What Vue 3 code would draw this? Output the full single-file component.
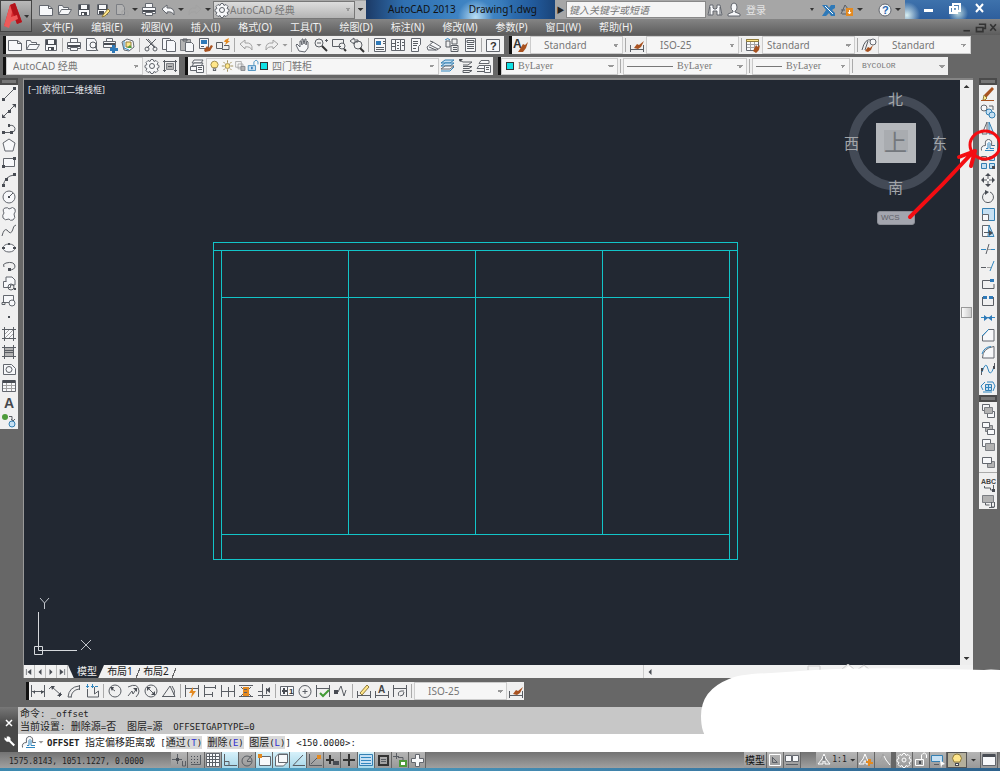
<template>
  <div class="app">
    <header class="header">
      <button class="logo" aria-label="Application menu">
        <svg width="32" height="31" viewBox="0 0 32 31">
          <path d="M3 25L9 4l5-2 7 19-5 2-2-5-5 2-1 6z" fill="#d7282d" />
          <path d="M9 4l5-2 7 19-5 2z" fill="#b3131b" />
          <path d="M3 25L9 4l2 7-1 5 6-2 1 4-7 3-2 6z" fill="#ee5a5a" />
          <path d="M23 14h5l-2 3z" fill="#333" />
        </svg>
      </button>
      <div class="titlebar">
        <div class="quick">
          <template v-for="(name, i) in quickTools" :key="i">
            <i v-if="name === 'v'" class="caret"></i>
            <button v-else class="tool" :aria-label="name"><Icon :name="name" /></button>
          </template>
        </div>
        <label class="field workspace-top">
          <Icon name="gear" />
          <select aria-label="Workspace"><option>AutoCAD 经典</option></select>
        </label>
        <button class="more" aria-label="More"><i class="caret"></i></button>
        <h1 class="title"><span>AutoCAD 2013</span><span>Drawing1.dwg</span></h1>
        <button class="play" aria-label="Expand">▶</button>
        <input class="search" type="text" placeholder="键入关键字或短语" aria-label="Search" />
        <button class="tool" aria-label="Find"><Icon name="binoculars" /></button>
        <button class="login"><Icon name="user" />登录</button>
        <i class="caret login-caret"></i>
        <button class="tool" aria-label="Exchange"><Icon name="exchange" /></button>
        <button class="tool" aria-label="Connect"><Icon name="connect" /></button>
        <i class="caret"></i>
        <button class="tool help" aria-label="Help"><Icon name="help" /></button>
        <i class="caret"></i>
        <div class="window-buttons">
          <button aria-label="Minimize"><Icon name="min" /></button>
          <button aria-label="Restore"><Icon name="restore" /></button>
          <button aria-label="Close"><Icon name="close" /></button>
        </div>
      </div>
      <nav class="menu">
        <a v-for="item in menu" :key="item" href="#">{{ item }}</a>
        <div class="doc-buttons">
          <button aria-label="Minimize drawing"><Icon name="docMin" /></button>
          <button aria-label="Restore drawing"><Icon name="docRestore" /></button>
          <button aria-label="Close drawing"><Icon name="docClose" /></button>
        </div>
      </nav>
    </header>

    <div class="toolbars">
      <div class="row">
        <div class="bar standard">
          <template v-for="(name, i) in standardTools" :key="i">
            <i v-if="name === '|'" class="sep"></i>
            <i v-else-if="name === 'v'" class="caret soft"></i>
            <button v-else class="tool" :aria-label="name"><Icon :name="name" /></button>
          </template>
        </div>
        <div class="bar styles">
          <template v-for="(style, i) in styles" :key="i">
            <i v-if="i" class="sep"></i>
            <button class="tool" :aria-label="style.icon"><Icon :name="style.icon" /></button>
            <select class="style-select" :class="{ tight: style.tight }" :aria-label="style.label">
              <option>{{ style.value }}</option>
            </select>
          </template>
        </div>
      </div>
      <div class="row">
        <div class="bar">
          <select class="workspace-select" aria-label="Current workspace"><option>AutoCAD 经典</option></select>
          <button class="tool" aria-label="Workspace settings"><Icon name="gear" /></button>
          <button class="tool" aria-label="My workspace"><Icon name="frame" /></button>
        </div>
        <div class="bar layers">
          <button class="tool" aria-label="Layer properties"><Icon name="layerProps" /></button>
          <label class="field layer-field">
            <Icon name="bulb" /><Icon name="sun" /><Icon name="freeze" /><Icon name="unlock" />
            <i class="swatch"></i>
            <select aria-label="Layer"><option>四门鞋柜</option></select>
          </label>
          <button class="tool" aria-label="Make current"><Icon name="layers" /></button>
          <button class="tool" aria-label="Previous layer"><Icon name="layerPrev" /></button>
          <button class="tool" aria-label="Layer states"><Icon name="layerState" /></button>
        </div>
        <div class="bar properties">
          <label class="field color-field">
            <i class="swatch"></i>
            <select aria-label="Color"><option>ByLayer</option></select>
          </label>
          <i class="sep"></i>
          <label class="field type-field">
            <i class="line long"></i>
            <select aria-label="Linetype"><option>ByLayer</option></select>
          </label>
          <i class="sep"></i>
          <label class="field weight-field">
            <i class="line"></i>
            <select aria-label="Lineweight"><option>ByLayer</option></select>
          </label>
          <i class="sep"></i>
          <select class="plot-select" aria-label="Plot style"><option>BYCOLOR</option></select>
        </div>
      </div>
    </div>

    <main class="workspace">
      <aside class="palette">
        <i class="grip"></i>
        <div class="stack draw-stack">
          <button v-for="name in drawTools" :key="name" class="tool" :aria-label="name"><Icon :name="name" /></button>
        </div>
      </aside>

      <section class="document">
        <div class="canvas">
          <p class="view-label">[−][俯视][二维线框]</p>
          <svg class="cabinet" width="526" height="318" viewBox="0 0 526 318">
            <g fill="none" stroke="#12c4c8" shape-rendering="crispEdges">
              <path d="M.5 .5h524v317H.5z" />
              <path d="M.5 8.500h524M8.500 55.500h508M8.500 292.500h508" />
              <path d="M8.500 8.500v309M516.500 8.500v309M135.500 8.500v284M262.500 8.500v284M389.500 8.500v284" />
            </g>
          </svg>
          <div class="compass">
            <svg width="110" height="110" viewBox="0 0 110 110">
              <circle cx="55" cy="55" r="43" fill="none" stroke="#434a56" stroke-width="9" />
              <rect x="35" y="35" width="40" height="40" fill="#b5b8bc" />
              <rect x="43" y="42" width="24" height="22" fill="#a9acb0" />
            </svg>
            <span class="north">北</span>
            <span class="west">西</span>
            <span class="up">上</span>
            <span class="east">东</span>
            <span class="south">南</span>
          </div>
          <button class="wcs">WCS</button>
          <svg class="ucs" width="62" height="62" viewBox="0 0 62 62">
            <path d="M4.500 52V16M8 54.500h35M.5 50.500h8v8h-8zM4.500 51v3.500h4" fill="none" stroke="#d5d8dc" />
            <path d="M6 2l4.500 5L15 2M10.500 7v6M47 44l10 10M57 44L47 54" fill="none" stroke="#c0c4ca" />
          </svg>
        </div>
        <div class="scroll-y">
          <button aria-label="Scroll up"><i class="up-arrow"></i></button>
          <i class="thumb"></i>
          <button aria-label="Scroll down"><i class="caret"></i></button>
        </div>
        <div class="tabs">
          <button v-for="name in ['first', 'prev', 'next', 'last']" :key="name" class="nav" :aria-label="name">
            <Icon :name="name" />
          </button>
          <button class="tab active">模型</button>
          <button class="tab">布局1</button>
          <button class="tab">布局2</button>
          <button class="scroll-left" aria-label="Scroll left"><Icon name="prev" /></button>
        </div>
      </section>

      <aside class="palette">
        <i class="grip"></i>
        <div class="stack modify-stack">
          <button v-for="name in modifyTools" :key="name" class="tool" :aria-label="name"><Icon :name="name" /></button>
        </div>
        <i class="grip"></i>
        <div class="stack order-stack">
          <button v-for="name in orderTools" :key="name" class="tool" :aria-label="name"><Icon :name="name" /></button>
          <i class="divider"></i>
          <button class="tool" aria-label="Text to front"><Icon name="abcFront" /></button>
          <button class="tool" aria-label="Hatch to back"><Icon name="hatchBack" /></button>
        </div>
      </aside>

      <svg class="pointer" width="100" height="160" viewBox="0 0 100 160">
        <ellipse cx="85" cy="67" rx="15" ry="14" fill="none" stroke="#f40d12" stroke-width="3" />
        <path d="M10 139Q43 107 74 73M59 79l16-6-4 15" fill="none" stroke="#f40d12" stroke-width="4" stroke-linecap="round" stroke-linejoin="round" />
      </svg>
    </main>

    <div class="dock">
      <div class="bar dimension">
        <template v-for="(name, i) in dimensionTools" :key="i">
          <i v-if="name === '|'" class="sep"></i>
          <button v-else class="tool" :aria-label="name"><Icon :name="name" /></button>
        </template>
        <select class="style-select" aria-label="Dimension style"><option>ISO-25</option></select>
        <button class="tool" aria-label="Dimension style manager"><Icon name="dimStyle" /></button>
      </div>
    </div>

    <section class="command">
      <div class="command-side">
        <button aria-label="Close"><Icon name="cmdClose" /></button>
        <button aria-label="Customize"><Icon name="wrench" /></button>
      </div>
      <div class="command-body">
        <div class="history">
          <p><b>命令</b>: _offset</p>
          <p><b>当前设置</b>: <b>删除源</b>=<b>否</b>{{ '  ' }}<b>图层</b>=<b>源</b>{{ '  ' }}OFFSETGAPTYPE=0</p>
        </div>
        <div class="prompt">
          <Icon name="offset" /><i class="caret soft"></i>
          <p><strong>OFFSET</strong> <b>指定偏移距离或</b> [<button><b>通过</b>(<em>T</em>)</button> <button><b>删除</b>(<em>E</em>)</button> <button><b>图层</b>(<em>L</em>)</button>] &lt;150.0000&gt;:</p>
        </div>
      </div>
    </section>

    <footer class="status">
      <span class="coords">1575.8143, 1051.1227, 0.0000</span>
      <div class="toggles">
        <button v-for="item in toggles" :key="item.icon" :class="{ on: item.on }" :aria-label="item.icon">
          <Icon :name="item.icon" />
        </button>
      </div>
      <div class="status-right">
        <button class="model">模型</button>
        <button aria-label="Layout"><Icon name="layoutView" /></button>
        <button aria-label="Quick view"><Icon name="quickView" /></button>
        <i class="gap"></i>
        <button class="scale"><Icon name="person" />1:1<i class="caret"></i></button>
        <button aria-label="Annotation visibility"><Icon name="personSun" /></button>
        <button aria-label="Auto scale"><Icon name="personOff" /></button>
        <i class="gap small"></i>
        <button aria-label="Settings"><Icon name="gearLight" /></button>
        <button aria-label="Lock"><Icon name="lockLight" /></button>
        <button aria-label="Hardware"><Icon name="hardware" /></button>
        <button class="pressed" aria-label="Isolate"><Icon name="bulb" /></button>
        <button class="narrow" aria-label="Status menu"><i class="caret"></i></button>
        <button aria-label="Clean screen"><Icon name="screen" /></button>
      </div>
    </footer>
    <div class="taskbar"></div>

    <svg class="patch" width="299" height="88" viewBox="0 0 299 88">
      <path d="M107 6V2h12v4M140 6l7-6 7 6M156 6l7-5 6 5" fill="none" stroke="#ccc" />
      <path d="M299 6q-10-1-16 0L240 5q-80-2-126 1L70 9Q38 10 28 15 0 26 0 52q0 18 8 24v9h291z" fill="#fff" />
      <path d="M141 7l7-5 6 5M156 7l7-4 6 4" fill="#fff" />
    </svg>
  </div>
</template>

<script setup>
import { h } from 'vue'

// Every icon is a list of strokes on a 16x16 grid, each one starting with its paint key
const paints = {
  k: { stroke: '#5a5e64' },
  n: { stroke: '#a2a2a2' },
  b: { stroke: '#3187c0' },
  l: { stroke: '#fff' },
  w: { fill: '#f7f8fa', stroke: '#63676e' },
  u: { fill: '#c6e0f3', stroke: '#3480b3' },
  K: { fill: '#484c53' },
  N: { fill: '#b2b2b2', stroke: '#7c7f84' },
  B: { fill: '#2e79b8' },
  L: { fill: '#fff' },
  y: { fill: '#ffe68a', stroke: '#8f7b3b' },
  o: { fill: '#e48a20' },
  r: { fill: '#a85220' },
  g: { fill: '#4d9b3a' },
  G: { stroke: '#429b35', 'stroke-width': 2 },
  W: { stroke: '#fff', 'stroke-width': 2 },
  D: { stroke: '#333', 'stroke-width': 2 }
}

const icons = {
  new: 'w M1.500 3.500h9l4 3v7h-13z;k M10.500 3.500v3h4',
  open: 'w M1.500 12.500v-9h4l1 2h5v2;w M1.500 12.500l3-5h10l-3 5z',
  save: 'w M2.500 2.500h11v11h-11z;K M3 3h2v4h6V3h2v5H3z;K M5 10h6v3H5z;L M6 11h2v2H6z',
  saveAs: 'w M2.500 2.500h10v10h-10z;K M3 3h1v4h7V3h1v5H3z;K M4 9h5v3H4z;y M8 13l5-6 2 2-5 5-3 1z',
  cloud: 'N M2.500 2.500h6l2 3v7h-8z;n M8 9h6v5H8z',
  print: 'w M4.500 5.500v-4h7v4;w M1.500 5.500h13v6h-13z;K M2 8h12v2H2z;w M4.500 10.500h7v3h-7z',
  undo: 'w M2 7l5-4v3q8-1 7 7-2-4-7-3v2z',
  redo: 'n M14 7L9 3v3Q1 5 2 13q2-4 7-3v2z',
  undoSoft: 'n M2 7l5-4v3q8-1 7 7-2-4-7-3v2z',
  gear: 'w M7 1.500h2l1 2 2-1 2 2-1 2 2 1v2l-2 1 1 2-2 2-2-1-1 2H7l-1-2-2 1-2-2 1-2-2-1v-2l2-1-1-2 2-2 2 1z;k M5.500 8a2.500 2.500 0 1 0 5 0 2.500 2.500 0 1 0-5 0',
  gearLight: 'l M7 1.500h2l1 2 2-1 2 2-1 2 2 1v2l-2 1 1 2-2 2-2-1-1 2H7l-1-2-2 1-2-2 1-2-2-1v-2l2-1-1-2 2-2 2 1z;l M6 8a2 2 0 1 0 4 0 2 2 0 1 0-4 0',
  binoculars: 'w M3 3h3v3l1 1h2l1-1V3h3l2 10h-5V9H6v4H1z;k M3 5v8M13 5v8',
  user: 'w M5 5q0-4 3-4t3 4-2 4v1l5 2v2H2v-2l5-2V9Q5 8 5 5z',
  exchange: 'B M1 3h5l2 3 2-3h4v3l-3 2 3 3v3h-4l-2-3-3 3H1l4-6z;l M4 4l8 8',
  connect: 'k M2 12l4-9 3 4M3 12h4M2 8h4;o M7 6h7v8H7z;l M10.500 8v4M9 10l1.500 2 1.500-2',
  help: 'w M2 8a6 6 0 1 0 12 0 6 6 0 1 0-12 0;t 5 12 11 #2767b0 ?',
  min: 'L M3 9h9v3H3z',
  restore: 'W M6 4h7v7H6z;W M3 7h7v6H3z',
  close: 'W M4 4l7 8M11 4l-7 8',
  docMin: 'D M3 12h8',
  docRestore: 'D M6 4h8v5h-3M3 8h8v5H3z',
  docClose: 'D M4 4l7 8M11 4l-7 8',
  preview: 'w M2.500 1.500h8l2 3v9h-10z;k M6 8a3 3 0 1 0 6 0 3 3 0 1 0-6 0M11 10l3 4',
  publish: 'w M4.500 4.500v-3h6v3;w M1.500 4.500h12v6h-12z;K M2 6h11v2H2z;B M10 8h3v3h3v3h-3v2h-3v-2H8v-3h2z',
  web: 'w M2 5l5-3 6 2 1 6-5 4-5-1z;y M6 5h5v5H6z;b M4 4v7l5 2;g M7 11l3-3 2 3z',
  cut: 'k M3 2l9 9M13 2l-9 9M5 2l7 8;k M2 12a2 2 0 1 0 4 0 2 2 0 1 0-4 0M10 12a2 2 0 1 0 4 0 2 2 0 1 0-4 0',
  copy: 'w M1.500 1.500h7l2 2v9h-9z;w M5.500 3.500h7l2 2v9h-9z',
  paste: 'N M1.500 2.500h10v11h-10z;k M4 2h4v2H4z;w M6.500 5.500h6l2 2v7h-8z',
  match: 'w M2.500 1.500h9v10h-9z;B M4 3h6v4H4z;k M4 9.500h3;r M7 13l3-4 2 2 2-3 2 1-3 5-5 1z',
  block: 'k M1.500 5.500h6v6h-6zM9 8.500h5v4H7;o M10 3l4-2-1 3h2l-5 4 1-3h-2z',
  hand: 'w M4 14L1 8l1-1 3 3V4h1l1 4V2h1l1 5 1-5h1v6l1-4 1 1v6l-3 4z',
  zoomRt: 'k M2 6a4 4 0 1 0 8 0 4 4 0 1 0-8 0M4 6h4;D M9 9l5 5;k M12 3.500h3M13.500 2v3',
  zoomWin: 'k M10 9.500H1.500v-7h11v4;k M8 9a3 3 0 1 0 6 0 3 3 0 1 0-6 0;D M13 12l2 2',
  zoomPrev: 'k M5 8a4 4 0 1 0 8 0 4 4 0 1 0-8 0;D M11 11l4 4;k M1 4l4-3v2h4v2H5v2z',
  props: 'w M2.500 1.500h11v13h-11z;B M4 4h5v4H4z;k M4 10.500h8M4 12.500h8M11 4.500h2M11 6.500h2',
  center: 'w M1.500 2.500h13v11h-13z;k M5.500 3v10M10.500 3v10M7 5.500h2M12 5.500h2M7 8.500h2M12 8.500h2M2 6.500h3M2 9.500h3M7 11.500h2',
  palettes: 'w M3.500 1.500h9v6l-2 2v5h-7z;k M5 4.500h5M5 6.500h5M5 8.500h4M5 11.500h3',
  sheet: 'w M1 10l6-5 8 5-4 3H2z;k M4 8l8 4M3 10l7 3M7 5l-3-1',
  markup: 'k M2 4h4v6H2zM8 2h5v5H8zM7 8.500h7v6H7zM9 10.500h4M9 12.500h4;b M1 3q3-3 5 0',
  calc: 'w M3.500 1.500h10v13h-10z;k M5 3.500h7v2H5zM5 7.500h7M5 9.500h7M5 11.500h7',
  question: 'w M1.500 2.500h13v12h-13z;t 5 13 11 #333 ?',
  textStyle: 't 0 11 12 #333 A;r M7 12l3-5 2 1 3-3-2 6-3 4H5z',
  dimStyle: 'k M1.500 8v7M14.500 8v7M2 12.500h12;r M5 11l3-4 2 1 5-4-3 6-3 2z',
  tableStyle: 'w M1.500 2.500h12v9l-3 2h-9z;y M1.500 2.500h12v2h-12z;n M2 7.500h11M2 10.500h10M5.500 5v8M9.500 5v8;r M8 14l3-6 2 2 2-2-1 5-3 3z',
  leaderStyle: 'k M1 13q3-12 9-10M4 13l3-9;w M9 5a3 3 0 1 0 6 0 3 3 0 1 0-6 0;r M4 14l3-4 2 1 3-3-2 5-3 2z',
  frame: 'N M4.500 5.500h7v6h-7z;k M1 3.500h14M2.500 2v12M13.500 2v12M1 12.500h3M12 12.500h3M6 8.500h4',
  layerProps: 'w M5 2h9l-2 3H3z;w M5 5h9l-2 3H3z;w M1.500 8.500h7v4h-7z;w M7.500 7.500h7v7h-7z;k M9 9.500h4M9 11.500h4',
  layers: 'u M5 2h9l-4 3H1z;u M5 5h9l-4 3H1z;w M5 8h9l-4 3H1z;b M1 13h9l4-4',
  layerPrev: 'k M1 2l4 2h9l-4 3H5M5 8.500h9l-3 2H5M5 12.500h9l-3 2H5z;K M1 1h4L2 4z',
  layerState: 'w M5 2.500h8v3H3zM3 7.500h7v3H1z;k M1 13.500h7;w M8.500 7.500h6v7h-6z;k M10 9.500h3M10 11.500h3',
  bulb: 'y M5 10Q2 6 5 3q3-2 6 0 3 3 0 7z;K M6 11h4v3H6z;L M7 12h2v1H7z',
  sun: 'y M5 8a3 3 0 1 0 6 0 3 3 0 1 0-6 0;y M8 1v3M8 12v3M1 8h3M12 8h3M3 3l2 2M11 11l2 2M13 3l-2 2M3 13l2-2',
  freeze: 'n M2 2.500h7v7H2zM5 5.500h6v6H5z;N M8.500 8.500h5v5h-5z',
  unlock: 'u M1.500 7.500h9v6h-9z;b M8.500 7V3q3-4 5 0v3;B M5 9h2v3H5z',
  lockLight: 'l M2.500 7.500h8v6h-8z;l M8.500 7V3q3-4 5 0v3;K M6 9h2v3H6z',
  // draw palette
  line: 'k M3 13L13 3;K M1 12h3v3H1zM12 1h3v3h-3z',
  xline: 'k M2 14L14 2;K M1 11l4 4H1zM11 1h4v4zM7 7h3v3H7z',
  pline: 'k M2 12.500h8q5-1 4-4-1-4-6-3;K M1 11h3v3H1zM9 11h3v3H9zM7 4h2v3H7z',
  polygon: 'w M8 2l6 4-2 8H4L2 6z',
  rect: 'w M2.500 4.500h11v8h-11z;K M1 11h3v3H1zM12 3h3v3h-3z',
  arc: 'k M2 14Q4 4 13 3;K M1 12h3v3H1zM4 6h3v3H4zM12 1h3v3h-3z',
  circle: 'w M2 8a6 6 0 1 0 12 0 6 6 0 1 0-12 0;k M8 8l4-4;K M7 7h2v2H7z',
  revcloud: 'w M3 7Q1 3 4 2q3-1 4 1 4-3 6 0 1 3-1 5 2 4-1 6-3 1-4-1-4 2-6-1-1-3 1-5z',
  spline: 'k M1 13q2-8 5-6 4 6 6-1 0-3 3-4',
  ellipse: 'w M2 8a6 4 0 1 0 12 0 6 4 0 1 0-12 0;K M1 7h3v2H1zM12 7h3v2h-3zM7 3h2v2H7z',
  ellipseArc: 'k M3 9Q1 6 5 5q8-2 9 3 0 4-6 4;K M7 10h3v3H7z',
  insert: 'w M2.500 6.500h7v6h-7z;w M5 6V2h6l3 3v5h-4;k M7 12a3 3 0 1 0 6 0 3 3 0 1 0-6 0;K M13 13h2v2h-2z',
  makeBlock: 'w M2.500 3.500h10v7h-10z;w M8 11a3 3 0 1 0 6 0 3 3 0 1 0-6 0;k M1 10.500h3v2H1z',
  point: 'K M7 7h2v2H7z',
  hatch: 'w M3.500 3.500h9v9h-9z;k M1 3.500h14M1 12.500h14M3.500 1v14M12.500 1v14;n M4 8l4-4M4 12l8-8M8 12l4-4',
  gradient: 'N M3.500 3.500h9v9h-9z;k M1 3.500h14M1 12.500h14M3.500 1v14M12.500 1v14M4 6.500h8M4 8.500h8',
  region: 'w M2.500 13.500v-10h8l4 4v6z;k M5 8.500a3 3 0 1 0 6 0 3 3 0 1 0-6 0',
  table: 'w M1.500 2.500h13v11h-13z;K M2 2h12v3H2z;n M2 7.500h12M2 10.500h12M5.500 5v8M10.500 5v8',
  mtext: 't 3 13 14 #44474d A',
  addSelected: 'g M1 5a3 3 0 1 0 6 0 3 3 0 1 0-6 0;k M8 4.500h3v4M10 7l2 2 2-2;u M8 12a3 3 0 1 0 6 0 3 3 0 1 0-6 0',
  // modify palette
  erase: 'r M4 9l8-8 2 2-8 9z;y M4 9l3 3-2 2H3z;r M1 14h13v1H1z',
  copyObj: 'w M1 5a3 3 0 1 0 6 0 3 3 0 1 0-6 0;u M6 9a3 3 0 1 0 6 0 3 3 0 1 0-6 0;u M9 12a3 3 0 1 0 6 0 3 3 0 1 0-6 0;k M9 3h4v4',
  mirror: 'w M7 2v12H2z;u M9 2v12h5z',
  offset: 'w M1.500 13.500q-1-5 4-5-1-6 3-6t3 6h3;b M5 13.500h9M6 11.500h2v-5q1-2 2 0v5h4;b M14 8.500h1',
  array: 'w M1.500 2.500h5v4h-5z;u M9.500 2.500h5v4h-5zM1.500 9.500h5v5h-5zM9.500 9.500h5v5h-5z;K M12 12h3v3h-3z',
  move: 'k M8 2v12M2 8h12;K M5 4l3-3 3 3zM5 12l3 3 3-3zM4 5L1 8l3 3zM12 5l3 3-3 3z;L M7 7h2v2H7z',
  rotate: 'k M6 3a5.500 5.500 0 1 0 4 0;K M5 1l4 2-4 3z',
  scale: 'u M2.500 2.500h12v12h-12z;w M2.500 8.500h6v6h-6z',
  stretch: 'w M2.500 2.500h7v11h-7z;u M9 2l5 11.500H8z;k M4 9.500h7;K M9 7l4 3-4 3z',
  trim: 'b M1 8.500h5M11 8.500h4;k M6 13L9 3;n M8 8.500h3',
  extend: 'k M1 9.500h5;n M7 9.500h4;b M10 13l4-10',
  breakPoint: 'k M13 5.500H2.500v8H14V9;B M10 4h4v3h-4z',
  break: 'k M2.500 5v8.500h11V5;B M3 4h4v3H3zM9 4h4v3H9z',
  join: 'b M1 8.500h14;B M4 6l4 3-4 3zM12 6L8 9l4 3z',
  chamfer: 'w M2.500 14V9l6-6.500H14V14z;b M2 9l7-7',
  fillet: 'w M2.500 14q0-10 11.500-11.500V14z;b M2 10Q4 3 11 2.500',
  blend: 'k M1.500 14V9M14.500 2v5;b M2 11q4-12 6-3t6-2;K M1 7h2v3H1zM13 5h2v3h-2z',
  explode: 'u M5.500 6.500h6v6h-6z;b M3 12L1 8l4-4M7 4h6l2 4-2 5M3 14h9M8.500 7v6M5 9.500h6',
  front: 'w M2.500 1.500h7v6h-7z;w M7.500 8.500h7v6h-7z;N M4.500 4.500h8v6h-8z',
  back: 'N M5.500 5.500h7v6h-7z;w M2.500 2.500h7v5h-7z;w M7.500 9.500h7v5h-7z',
  above: 'w M2.500 2.500h8v7h-8z;N M5.500 6.500h9v7h-9z',
  under: 'N M7.500 7.500h7v6h-7z;w M2.500 3.500h9v6h-9z',
  abcFront: 't 1 8 7 #444 ABC;k M4.500 10v2h6v2h3V9;K M12 13h3v3h-3z',
  hatchBack: 'N M2.500 2.500h11v7h-11z;k M5.500 10v2h4M11.500 9v5h3V9M9 14.500h5',
  // layout tabs
  first: 'k M4.500 4v8;K M11 4v8L6 8z',
  prev: 'K M10 4v8L6 8z',
  next: 'K M6 4v8l4-4z',
  last: 'k M11.500 4v8;K M5 4v8l5-4z',
  // dimensions
  linear: 'k M1.500 2v12M14.500 2v12M2 8.500h12;K M3 9l2-2v4zM14 9l-3-2v4z',
  aligned: 'k M1 6l3-3M11 14l3-3M4 4l9 8;K M3 3h4L4 7zM13 13V9l-4 4z',
  arcLength: 'k M2 14Q3 4 13 3M5 14q1-7 8-8M2 14h4M13.500 2v5',
  ordinate: 'k M3.500 6v8h11V8l-4 3V4;b M2 3.500h3M7 3.500h3M3.500 1v4M8.500 1v4M11 3.500h3',
  radius: 'k M2 8a6 6 0 1 0 12 0 6 6 0 1 0-12 0M8 8L4 5;K M3 4h4L5 8z',
  jogged: 'k M3 4q10-5 11 4 0 3-3 6M3 13l4-5 1 3 4-6;K M8 5h4v4z',
  diameter: 'k M2 8a6 6 0 1 0 12 0 6 6 0 1 0-12 0M4 4l8 8;K M4 4h4L4 8zM12 12V8l-4 4z',
  angular: 'k M1 13.500h13L9 3 2 13M11 3q4 5 2 9',
  quick: 'k M1.500 2v12M14.500 2v12M2 5.500h12;o M9 4L5 10h3l-1 5 5-7H9z',
  baseline: 'k M2.500 2v12M13.500 2v4M10.500 9v5M3 4.500h10M3 11.500h8',
  continue: 'k M1.500 2v12M8.500 4v10M14.500 2v12M2 8.500h12',
  space: 'k M1 2.500h14M1 13.500h14M3 4l3 3M13 4l-3 3M3 13l3-3M13 13l-3-3;o M5 4h6v9H5z;k M6 6.500h3M6 9.500h3',
  breakDim: 'k M6.500 1v14M2 12.500h12M2 8.500h4M10.500 5v6;K M10 7l4-3v6z',
  tolerance: 'w M1.500 3.500h13v9h-13z;k M8.500 4v9;K M3 7h5v2H3zM4 5h2v6H4z;t 10 11 8 #333 1',
  centerMark: 'k M2 8.500a6 6 0 1 0 12 0 6 6 0 1 0-12 0M8 6v5M5.500 8.500h5',
  inspect: 'k M1.500 2v12M14.500 2v12M2 5.500h12;G M5 10l3 3 6-6',
  jogLine: 'k M1 9h4l3-6 3 10 2-6;K M1 7h4v4H1z',
  dimEdit: 'k M1.500 8v7M14.500 8v7M2 12.500h12;y M4 10l7-8 2 2-7 8z',
  dimText: 'k M1.500 8v7M14.500 8v7M2 12.500h12;t 4 10 10 #444 A',
  dimUpdate: 'k M1.500 2v12M14.500 2v12M2 5.500h12M7 13q-2-4 2-5h3M12 9q0 4-4 4',
  cmdClose: 'W M4 4l8 8M12 4l-8 8',
  wrench: 'L M2 3l3 2V2h3l2 2v3l6 6-2 2-6-6H5L2 6z',
  // status bar
  infer: 'k M6.500 2v10M1 7.500h10M11.500 9v5h3V9;K M5 6h3v3H5z',
  snap: 'k M3 12.500h9.500V3;K M3 4h1v1H3zM6 4h1v1H6zM9 4h1v1H9zM3 7h1v1H3zM6 7h1v1H6zM9 7h1v1H9zM3 10h1v1H3zM6 10h1v1H6zM9 10h1v1H9z',
  grid: 'w M1.500 1.500h13v13h-13z;k M2 4.500h12M2 7.500h12M2 10.500h12M4.500 2v12M7.500 2v12M10.500 2v12',
  ortho: 'k M2.500 2v11.500H15M3 9.500h4v4',
  polar: 'k M3 9a5 5 0 1 0 10 0 5 5 0 1 0-10 0M8 9l5-6M8 9.500h4',
  osnap: 'w M3.500 4.500h11v9h-11z;o M2 2h4v4H2z',
  osnap3d: 'w M2.500 8V5l3-3h9v8l-4 4h-8zM5.500 2.500h9v8h-9z',
  otrack: 'k M13 3L3 13.500h12',
  ducs: 'k M2.500 2v11.500H15M4 12l8-8;o M10 3h4v4h-4z',
  dyn: 'D M6 3v9M2 8h8;K M9 9h6v4H9z',
  lwt: 'D M8 2v12M2 8h12',
  tpy: 'u M1.500 2.500h13v11h-13z;b M3 5.500h10M3 8.500h10M3 11.500h10',
  qp: 'D M4 4h9v9H4z;k M6 7.500h5M6 9.500h5',
  sc: 'k M4.500 1v6M1 4.500h6M6 5.500h5v3;g M7 8h8v7H7z;L M9 10h4v3H9z',
  am: 'w M6.500 2.500h4v4h4v4h-4v4h-4v-4h-4v-4h4z',
  layoutView: 'l M2.500 2.500h11v11h-11z;k M5.500 5v5.500h5M6 6l4 4',
  quickView: 'w M1.500 3.500h6v6h-6zM8.500 3.500h6v6h-6z;k M2 12.500h12',
  person: 'l M8 2l2 5 4 5H9V9H7v3H2l4-5z;k M8 4v5',
  personSun: 'l M7 2l2 5 3 5H8V9H6v3H1l4-5z;o M10 7h3v3h2v2h-3v2h-2v-3H8V9h2z',
  personOff: 'n M8 2l2 5 4 5H9V9H7v3H2l4-5z;l M9 4l2 4 4 5',
  hardware: 'u M1.500 3.500h11v6h-11z;k M4 12.500h5;L M10 8l5 4-3 1-1 3z',
  screen: 'w M1.500 2.500h13v11h-13z;K M2 2h12v3H2z'
}

const Icon = ({ name }) => h('svg', { class: 'icon', viewBox: '0 0 16 16', 'aria-hidden': 'true' },
  icons[name].split(';').map((part) => {
    const key = part[0]
    if (key === 't') {
      const [x, y, size, fill, text] = part.slice(2).split(' ')
      return h('text', { x, y, fill, 'font-size': size, 'font-weight': 'bold' }, text)
    }
    return h('path', { d: part.slice(2), fill: 'none', ...paints[key] })
  })
)
Icon.props = ['name']

const quickTools = ['new', 'open', 'save', 'saveAs', 'cloud', 'v', 'print', 'undo', 'v', 'redo', 'v']

const menu = [
  '文件(F)', '编辑(E)', '视图(V)', '插入(I)', '格式(O)', '工具(T)',
  '绘图(D)', '标注(N)', '修改(M)', '参数(P)', '窗口(W)', '帮助(H)'
]

const standardTools = [
  'new', 'open', 'save', '|',
  'print', 'preview', 'publish', 'web', '|',
  'cut', 'copy', 'paste', 'match', 'block', '|',
  'undoSoft', 'v', 'redo', 'v', '|',
  'hand', 'zoomRt', 'zoomWin', 'zoomPrev', '|',
  'props', 'center', 'palettes', 'sheet', 'markup', 'calc', '|',
  'question'
]

const styles = [
  { icon: 'textStyle', label: 'Text style', value: 'Standard' },
  { icon: 'dimStyle', label: 'Dimension style', value: 'ISO-25' },
  { icon: 'tableStyle', label: 'Table style', value: 'Standard', tight: true },
  { icon: 'leaderStyle', label: 'Multileader style', value: 'Standard' }
]

const drawTools = [
  'line', 'xline', 'pline', 'polygon', 'rect', 'arc', 'circle', 'revcloud', 'spline', 'ellipse',
  'ellipseArc', 'insert', 'makeBlock', 'point', 'hatch', 'gradient', 'region', 'table', 'mtext', 'addSelected'
]

const modifyTools = [
  'erase', 'copyObj', 'mirror', 'offset', 'array', 'move', 'rotate', 'scale', 'stretch',
  'trim', 'extend', 'breakPoint', 'break', 'join', 'chamfer', 'fillet', 'blend', 'explode'
]

const orderTools = ['front', 'back', 'above', 'under']

const dimensionTools = [
  'linear', 'aligned', 'arcLength', 'ordinate', '|',
  'radius', 'jogged', 'diameter', 'angular', '|',
  'quick', 'baseline', 'continue', 'space', 'breakDim', '|',
  'tolerance', 'centerMark', 'inspect', 'jogLine', '|',
  'dimEdit', 'dimText', 'dimUpdate', '|'
]

const toggles = [
  { icon: 'infer' },
  { icon: 'snap' },
  { icon: 'grid' },
  { icon: 'ortho', on: true },
  { icon: 'polar' },
  { icon: 'osnap', on: true },
  { icon: 'osnap3d', on: true },
  { icon: 'otrack', on: true },
  { icon: 'ducs' },
  { icon: 'dyn' },
  { icon: 'lwt' },
  { icon: 'tpy', on: true },
  { icon: 'qp' },
  { icon: 'sc' },
  { icon: 'am' }
]
</script>

<style>
body {
  margin: 0;
  background: #676767;
}
</style>

<style scoped>
.app {
  position: relative;
  display: flex;
  flex-direction: column;
  min-height: 100vh;
  overflow: hidden;
  background: #676767;
  font-family: "Noto Sans", "Noto Sans CJK SC", sans-serif;
  font-size: 10px;
  line-height: 14px;
}
.app * {
  box-sizing: border-box;
}
button,
select,
input {
  margin: 0;
  padding: 0;
  border: 0;
  border-radius: 0;
  background: none;
  color: inherit;
  font: inherit;
}
p {
  margin: 0;
}
.icon {
  display: block;
  flex: none;
  width: 16px;
  height: 16px;
  font-family: "Liberation Sans", sans-serif;
}
.tool {
  display: flex;
  flex: none;
  align-items: center;
  justify-content: center;
  width: 18px;
}
select {
  appearance: none;
  flex: 1;
  min-width: 0;
  height: 100%;
  color: #777;
  outline: none;
  background-image:
    linear-gradient(45deg, transparent 50%, #999 50%),
    linear-gradient(135deg, #999 50%, transparent 50%);
  background-position: right 6px center, right 3px center;
  background-size: 3px 3px;
  background-repeat: no-repeat;
}
.caret {
  flex: none;
  width: 6px;
  height: 3px;
  margin: 0 1px;
  background: #333;
  clip-path: polygon(0 0, 100% 0, 50% 100%);
}
.caret.soft {
  background: #999;
}

/* Header */
.header {
  display: grid;
  grid-template-columns: 32px 1fr;
  grid-template-rows: 19px 16px;
  background: linear-gradient(#a6a6a6 54%, #858585 54%, #5c5c5c);
}
.logo {
  grid-row: 1 / 3;
  height: 32px;
  border: 1px solid #444;
  background: linear-gradient(#b9b9b9, #777);
  overflow: hidden;
}
.titlebar {
  display: flex;
  align-items: center;
  min-width: 0;
}
.quick {
  display: flex;
  flex: none;
  align-items: center;
  width: 181px;
  padding-left: 4px;
}
.quick .tool {
  width: 19px;
}
.field {
  display: flex;
  align-items: center;
  flex: none;
  height: 17px;
  border: 1px solid #c9c9c9;
  background: #f6f6f6;
}
.workspace-top {
  width: 142px;
  height: 18px;
  border-color: #777;
  background: linear-gradient(#ddd, #b4b4b4);
}
.more {
  display: flex;
  align-items: center;
  justify-content: center;
  width: 11px;
  height: 18px;
  background: #c4c4c4;
}
.title {
  display: flex;
  flex: 1;
  justify-content: center;
  gap: 13px;
  height: 19px;
  margin: 0;
  padding-left: 4px;
  background: radial-gradient(circle at 58% 90%, #b9def5 0, #3f83c2 16%, transparent 34%), linear-gradient(90deg, #1c3a66, #2f6fb0 20%, #3f88c8 60%, #225b9d 88%, #1a4479);
  color: #111;
  font-size: 10px;
  font-weight: 400;
  line-height: 19px;
  white-space: nowrap;
}
.play {
  width: 11px;
  color: #222;
  font-size: 8px;
}
.search {
  width: 140px;
  height: 17px;
  padding-left: 2px;
  border: 1px solid #888;
  background: #f4f4f4;
  font-style: italic;
}
.search::placeholder {
  color: #777;
}
.login {
  display: flex;
  align-items: center;
  gap: 4px;
  padding-left: 2px;
  color: #e4e4e4;
}
.login-caret {
  width: 4px;
  margin: 0 6px 0 44px;
}
.help {
  margin-left: 12px;
}
.window-buttons {
  display: flex;
  flex: none;
  align-items: center;
  justify-content: space-between;
  width: 95px;
  height: 19px;
  margin-left: 3px;
  padding: 0 12px 4px 16px;
  background: radial-gradient(circle at 2% 80%, #d9eef0, transparent 14%), radial-gradient(circle at 56% 70%, #b6d4dc, transparent 18%), linear-gradient(#3e72ac, #2e5f9d);
}
.menu {
  display: flex;
  align-items: center;
  gap: 18px;
  min-width: 0;
  padding-left: 10px;
}
.menu a {
  color: #f2f2f2;
  text-decoration: none;
  white-space: nowrap;
}
.doc-buttons {
  display: flex;
  height: 14px;
  margin-left: auto;
}
.doc-buttons .icon {
  width: 13px;
  height: 13px;
}

/* Toolbars */
.toolbars {
  display: flex;
  flex-direction: column;
  gap: 3px;
  padding: 1px 0 3px;
}
.row {
  display: flex;
  height: 18px;
}
.bar {
  display: flex;
  align-items: center;
  flex: none;
  height: 18px;
  border-left: 6px ridge #666;
  background: #f0f0f0;
}
.sep {
  flex: none;
  width: 1px;
  height: 14px;
  margin: 0 2px;
  background: #aaa;
}
.standard {
  width: 504px;
}
.styles {
  margin-left: 2px;
}
.style-select {
  flex: none;
  width: 93px;
  padding-left: 13px;
  border: 1px solid #ccc;
  background-color: #f6f6f6;
}
.style-select.tight {
  padding-left: 4px;
}
.workspace-select {
  flex: none;
  width: 137px;
  padding-left: 6px;
  border: 1px solid #ccc;
  background-color: #f6f6f6;
}
.layers {
  margin-left: 3px;
}
.layer-field {
  width: 233px;
  padding-left: 1px;
}
.layer-field .icon {
  width: 13px;
}
.swatch {
  flex: none;
  width: 8px;
  height: 8px;
  margin-right: 4px;
  border: 1px solid #333;
  background: #10e0e4;
}
.properties {
  margin-left: 2px;
}
.properties select {
  font-family: "Liberation Serif", serif;
}
.color-field {
  width: 117px;
  padding-left: 4px;
}
.type-field {
  width: 124px;
}
.weight-field {
  width: 98px;
}
.line {
  flex: none;
  width: 26px;
  height: 1px;
  margin: 0 4px 0 3px;
  background: #777;
}
.line.long {
  width: 46px;
}
.properties .plot-select {
  flex: none;
  width: 93px;
  padding-left: 7px;
  font-family: "Liberation Mono", monospace;
  font-size: 8px;
}

/* Workspace */
.workspace {
  position: relative;
  display: flex;
  flex: 1;
  min-height: 520px;
  gap: 5px;
  padding-right: 3px;
}
.palette {
  flex: none;
  width: 18px;
}
.grip {
  display: block;
  height: 7px;
  border: 2px solid #4b4b4b;
  background: #777;
}
.stack {
  display: grid;
  grid-auto-rows: 1fr;
  background: #f0f0f0;
}
.draw-stack {
  height: 344px;
}
.modify-stack {
  height: 310px;
}
.order-stack {
  grid-template-rows: repeat(4, 17px) 5px repeat(2, 17px);
  grid-auto-rows: auto;
}
.divider {
  align-self: center;
  height: 1px;
  background: #aaa;
}
.document {
  display: grid;
  flex: 1;
  grid-template-columns: 1fr 13px;
  grid-template-rows: 1fr 13px;
  min-width: 0;
  margin-right: 1px;
  border-top: 2px solid #858585;
  border-left: 1px solid #999;
}
.canvas {
  position: relative;
  overflow: hidden;
  background: #222832;
}
.view-label {
  padding: 3px 4px;
  color: #e2e4e8;
  font-size: 9px;
}
.cabinet {
  position: absolute;
  top: 162px;
  left: 189px;
}
.compass {
  position: absolute;
  top: 8px;
  right: 9px;
  width: 110px;
  height: 110px;
  color: #a3a6aa;
  font-size: 15px;
  line-height: 20px;
}
.compass span {
  position: absolute;
}
.compass .north {
  top: 1px;
  left: 47px;
}
.compass .west {
  top: 45px;
  left: 3px;
}
.compass .east {
  top: 45px;
  right: 4px;
}
.compass .south {
  top: 89px;
  left: 47px;
}
.compass .up {
  top: 41px;
  left: 43px;
  color: #74787d;
  font-family: "Noto Sans CJK SC", sans-serif;
  font-size: 23px;
  line-height: 24px;
}
.wcs {
  position: absolute;
  top: 131px;
  right: 45px;
  width: 38px;
  height: 14px;
  padding-left: 3px;
  border: 1px solid #8b8e96;
  border-radius: 3px;
  background: #a3a5ae;
  color: #5e6169;
  font-family: "Liberation Sans", sans-serif;
  font-size: 8px;
  line-height: 12px;
  text-align: left;
}
.ucs {
  position: absolute;
  bottom: 7px;
  left: 10px;
}
.scroll-y {
  display: flex;
  flex-direction: column;
  align-items: center;
  justify-content: space-between;
  background: #eee;
}
.scroll-y button {
  display: flex;
  align-items: center;
  justify-content: center;
  height: 13px;
}
.up-arrow {
  width: 6px;
  height: 3px;
  background: #333;
  clip-path: polygon(50% 0, 100% 100%, 0 100%);
}
.scroll-y .thumb {
  width: 11px;
  height: 11px;
  margin-bottom: 120px;
  border: 1px solid #999;
  background: linear-gradient(90deg, #fafafa, #ccc);
}
.tabs {
  display: flex;
  grid-column: 1 / 3;
  background: #f1f1f1;
}
.nav {
  display: flex;
  align-items: center;
  justify-content: center;
  width: 11px;
  border-right: 1px solid #bbb;
}
.nav .icon {
  width: 12px;
  height: 12px;
}
.tab {
  width: 36px;
  padding-right: 4px;
  color: #222;
  line-height: 13px;
  text-align: center;
  background: linear-gradient(112deg, transparent 34px, #666 34px, #666 35px, transparent 35px);
}
.tab.active {
  padding: 0 0 0 2px;
  background: #222832;
  color: #eee;
  clip-path: polygon(0 0, 100% 0, 84% 100%, 16% 100%);
}
.scroll-left {
  width: 16px;
  margin-left: auto;
  margin-right: 314px;
  border-left: 1px solid #ccc;
}
.scroll-left .icon {
  width: 12px;
  height: 12px;
}
.pointer {
  position: absolute;
  top: 0;
  right: 0;
  pointer-events: none;
}

/* Dimension toolbar */
.dock {
  height: 29px;
  padding: 4px 0 0 23px;
}
.dimension {
  width: 501px;
}

/* Command line */
.command {
  display: flex;
  height: 45px;
}
.command-side {
  display: flex;
  flex: none;
  flex-direction: column;
  justify-content: flex-end;
  align-items: center;
  gap: 2px;
  width: 18px;
  padding-bottom: 3px;
  background: linear-gradient(#777, #484848 40%);
}
.command-side .icon {
  width: 12px;
}
.command-body {
  flex: 1;
  min-width: 0;
  color: #222;
  font-family: "DejaVu Sans Mono", "Noto Sans CJK SC", monospace;
  font-size: 9px;
  line-height: 12px;
  white-space: pre;
}
.command-body b {
  font-family: "Noto Sans CJK SC", sans-serif;
  font-size: 10px;
  font-weight: 400;
  line-height: 12px;
}
.history {
  height: 27px;
  padding: 0 2px;
  background: #c7c7c7;
}
.prompt {
  display: flex;
  align-items: center;
  height: 18px;
  padding: 0 0 2px 3px;
  background: #fff;
}
.prompt p {
  padding-left: 2px;
}
.prompt button {
  background: #d9d9d9;
}
.prompt em {
  color: #3030d0;
  font-style: normal;
}

/* Status bar */
.status {
  display: flex;
  height: 16px;
  background: linear-gradient(#737373, #a0a0a0);
}
.coords {
  flex: none;
  width: 171px;
  padding-left: 9px;
  color: #222;
  font-family: "DejaVu Sans Mono", monospace;
  font-size: 8px;
  line-height: 19px;
}
.toggles,
.status-right {
  display: flex;
}
.status-right {
  margin-left: auto;
  padding-right: 2px;
}
.toggles button,
.status-right button {
  display: flex;
  flex: none;
  align-items: center;
  justify-content: center;
  width: 17px;
  border-right: 1px solid #666;
  background: linear-gradient(#b5b5b5, #999);
}
.toggles .on {
  background: linear-gradient(#d7f1fa, #a7d7e9);
}
.status-right .model {
  width: 23px;
  color: #111;
}
.status-right .gap {
  width: 15px;
}
.status-right .gap.small {
  width: 4px;
  background: #666;
}
.status-right .scale {
  width: 42px;
  color: #222;
  font-family: "DejaVu Sans Mono", monospace;
  font-size: 8px;
}
.status-right .scale .caret {
  margin-left: 3px;
}
.status-right .pressed {
  width: 20px;
  border: 1px solid #555;
  background: #b5b09c;
}
.status-right .narrow {
  width: 14px;
}
.taskbar {
  height: 3px;
  background: linear-gradient(90deg, #3c87ad, #4e9dc0 30%, #3b7ba5 70%, #2d618b);
}
.patch {
  position: absolute;
  right: 0;
  bottom: 19px;
  pointer-events: none;
}
</style>
